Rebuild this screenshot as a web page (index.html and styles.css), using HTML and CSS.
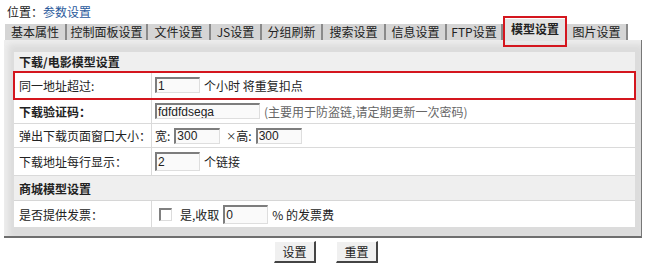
FILE: index.html
```html
<!DOCTYPE html>
<html lang="zh-CN">
<head>
    <meta charset="UTF-8">
    <title>参数设置 - 模型设置</title>
    <link rel="stylesheet" href="styles.css">
</head>
<body>
    <div class="crumb">位置：<a href="#">参数设置</a></div>

    <div class="tabs">
        <span class="tab w62">基本属性</span>
        <span class="tab w81">控制面板设置</span>
        <span class="tab w63">文件设置</span>
        <span class="tab w51">JS设置</span>
        <span class="tab w61">分组刷新</span>
        <span class="tab w63">搜索设置</span>
        <span class="tab w61">信息设置</span>
        <span class="tab w56">FTP设置</span>
        <span class="tab w64 active">模型设置</span>
        <span class="tab w61">图片设置</span>
    </div>

    <div class="panel">
        <div class="form">
            <div class="section h20">下载/电影模型设置</div>

            <div class="row h27 mark">
                <div class="label">同一地址超过:</div>
                <div class="value"><input class="field w45" type="text" value="1"> 个小时 将重复扣点</div>
            </div>
            <div class="row h25">
                <div class="label bold">下载验证码：</div>
                <div class="value"><input class="field w105" type="text" value="fdfdfdsega"> <span class="note">(主要用于防盗链,请定期更新一次密码)</span></div>
            </div>
            <div class="row h24">
                <div class="label">弹出下载页面窗口大小：</div>
                <div class="value">宽: <input class="field w46" type="text" value="300"> <span class="times">×</span>高: <input class="field w46" type="text" value="300"></div>
            </div>
            <div class="row h28">
                <div class="label">下载地址每行显示：</div>
                <div class="value"><input class="field w45 tall" type="text" value="2"> 个链接</div>
            </div>

            <div class="section h25">商城模型设置</div>

            <div class="row h26">
                <div class="label">是否提供发票：</div>
                <div class="value"><span class="check"></span> 是,收取 <input class="field w45 tall" type="text" value="0"> % 的发票费</div>
            </div>
        </div>
    </div>

    <div class="buttons">
        <button class="btn">设置</button>
        <button class="btn">重置</button>
    </div>
</body>
</html>
```

FILE: styles.css
```css
body {
    margin: 0;
    font-family: "Noto Sans CJK SC", "Liberation Sans", sans-serif;
    font-size: 12px;
    color: #222;
    background: #fff;
    width: 650px;
}
.crumb {
    height: 24px;
    padding-left: 7px;
    line-height: 24px;
}
.crumb a {
    color: #2a5a9c;
    text-decoration: none;
}

/* tabs */
.tabs {
    display: flex;
    align-items: flex-end;
    height: 16px;
    margin-left: 5px;
    position: relative;
}
.tab {
    box-sizing: border-box;
    height: 16px;
    line-height: 16px;
    text-align: center;
    background: #d5d5d5;
    border-right: 2px solid #8a8a8a;
    color: #222;
}
.tab.active {
    height: 22px;
    line-height: 20px;
    margin-bottom: -1px;
    background: #e4e4e4;
    border-right: none;
    font-weight: bold;
    position: relative;
}
.tab.active::after {
    content: "";
    position: absolute;
    left: 0;
    right: 0;
    top: -3px;
    bottom: -6px;
    border: 2px solid #d4161e;
}
.w45 { width: 45px; }
.w46 { width: 46px; }
.w51 { width: 51px; }
.w56 { width: 56px; }
.w61 { width: 61px; }
.w62 { width: 62px; }
.w63 { width: 63px; }
.w64 { width: 64px; }
.w81 { width: 81px; }
.w105 { width: 105px; }

/* panel */
.panel {
    margin: 0 8px 0 4px;
    padding: 12px 6px 9px 10px;
    background: #dcdcdc;
    border-right: 1px solid #777;
    border-bottom: 2px solid #6e6e6e;
    box-shadow: inset 4px 4px 6px #efefef;
}
.form {
    background: #fff;
}
.section {
    box-sizing: border-box;
    background: #efefef;
    border-bottom: 1px solid #d6d6d6;
    font-weight: bold;
    padding-left: 5px;
    display: flex;
    align-items: center;
}
.row {
    box-sizing: border-box;
    display: grid;
    grid-template-columns: 138px 1fr;
    border-bottom: 1px solid #dadada;
}
.row:last-child {
    border-bottom: none;
}
.h20 { height: 20px; }
.h24 { height: 24px; }
.h25 { height: 25px; }
.h26 { height: 26px; }
.h27 { height: 27px; }
.h28 { height: 28px; }
.mark {
    outline: 2px solid #d4161e;
    outline-offset: -1px;
    position: relative;
}
.label {
    display: flex;
    align-items: center;
    padding-left: 5px;
    border-right: 1px solid #dadada;
}
.bold {
    font-weight: bold;
}
.value {
    display: flex;
    align-items: center;
    gap: 4px;
    padding-left: 3px;
    white-space: nowrap;
}
.field {
    box-sizing: border-box;
    height: 16px;
    padding: 0 1px;
    font-family: "Liberation Sans", sans-serif;
    font-size: 12px;
    color: #222;
    background: #fafafa;
    border: 1px solid #dedede;
    border-top: 2px solid #7d7d7d;
    border-left: 2px solid #7d7d7d;
}
.field.tall {
    height: 19px;
}
.note {
    color: #666;
}
.times {
    font-size: 10px;
    margin-left: 2px;
    margin-right: -4px;
}
.check {
    width: 10px;
    height: 10px;
    margin-left: 4px;
    margin-right: 4px;
    border: 1px solid #dcdcdc;
    border-top: 2px solid #808080;
    border-left: 2px solid #808080;
    background: #fff;
}

/* buttons */
.buttons {
    display: flex;
    justify-content: center;
    gap: 20px;
    padding-top: 3px;
    padding-left: 2px;
}
.btn {
    width: 42px;
    height: 22px;
    padding: 0;
    font-family: "Noto Sans CJK SC", sans-serif;
    font-size: 12px;
    color: #222;
    background: #f0f0f0;
    border: 1px solid #fff;
    border-right: 2px solid #444;
    border-bottom: 2px solid #444;
}
```
